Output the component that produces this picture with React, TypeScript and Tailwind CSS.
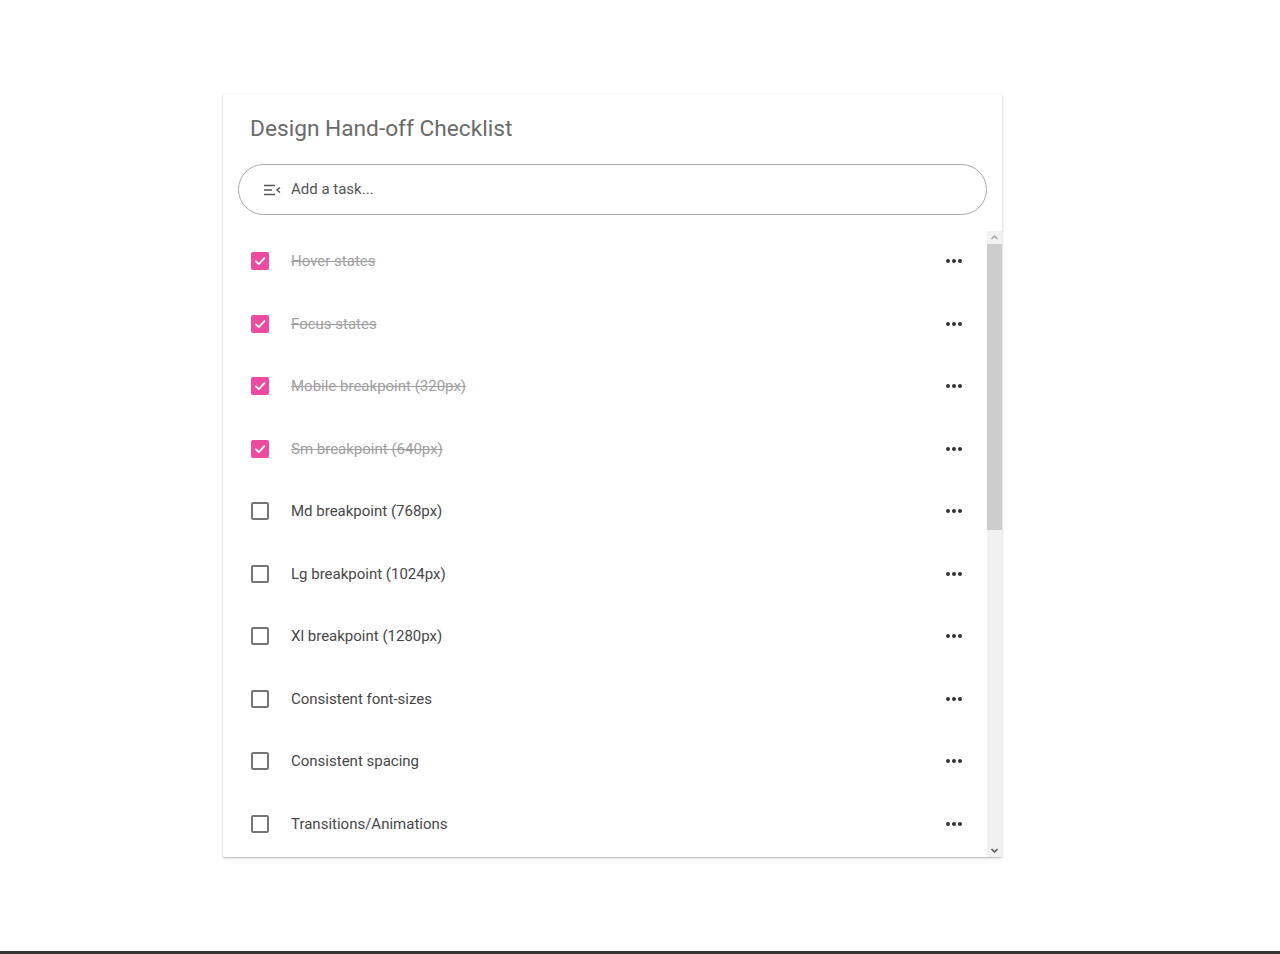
import { useState } from "react";

type Task = { id: number; label: string; done: boolean };

const initialTasks: Task[] = [
    { id: 1, label: "Hover states", done: true },
    { id: 2, label: "Focus states", done: true },
    { id: 3, label: "Mobile breakpoint (320px)", done: true },
    { id: 4, label: "Sm breakpoint (640px)", done: true },
    { id: 5, label: "Md breakpoint (768px)", done: false },
    { id: 6, label: "Lg breakpoint (1024px)", done: false },
    { id: 7, label: "Xl breakpoint (1280px)", done: false },
    { id: 8, label: "Consistent font-sizes", done: false },
    { id: 9, label: "Consistent spacing", done: false },
    { id: 10, label: "Transitions/Animations", done: false },
    { id: 11, label: "Color contrast", done: false },
    { id: 12, label: "Empty states", done: false },
    { id: 13, label: "Error states", done: false },
    { id: 14, label: "Loading states", done: false },
    { id: 15, label: "Disabled states", done: false },
    { id: 16, label: "Dark mode", done: false },
    { id: 17, label: "Icons exported", done: false },
    { id: 18, label: "Assets exported", done: false },
    { id: 19, label: "Copy reviewed", done: false },
    { id: 20, label: "Accessibility labels", done: false },
    { id: 21, label: "Print styles", done: false },
];

const VIEW_H = 626;
const ROW_H = 62.5;
const TRACK_H = VIEW_H - 26;

function MenuOpenIcon() {
    return (
        <svg width="18" height="12" viewBox="0 0 18 12" fill="none" stroke="#555" strokeWidth="1.5">
            <line x1="1" y1="1.5" x2="12" y2="1.5" />
            <line x1="1" y1="6" x2="9" y2="6" />
            <line x1="1" y1="10.5" x2="12" y2="10.5" />
            <polyline points="17,3.5 14,6 17,8.5" />
        </svg>
    );
}

function Checkbox({ checked, onChange }: { checked: boolean; onChange: () => void }) {
    return (
        <button
            type="button"
            onClick={onChange}
            className={`w-[18px] h-[18px] rounded-[2px] flex items-center justify-center shrink-0 ${
                checked ? "bg-[#ec4ba0]" : "border-2 border-[#757575] bg-white"
            }`}
        >
            {checked && (
                <svg width="14" height="14" viewBox="0 0 24 24" fill="none" stroke="white" strokeWidth="3" strokeLinecap="round" strokeLinejoin="round">
                    <polyline points="5,12.5 10,17.5 19.5,7" />
                </svg>
            )}
        </button>
    );
}

export default function App() {
    const [tasks, setTasks] = useState<Task[]>(initialTasks);
    const [draft, setDraft] = useState("");
    const [scrollTop, setScrollTop] = useState(0);

    const toggle = (id: number) =>
        setTasks(tasks.map((t) => (t.id === id ? { ...t, done: !t.done } : t)));

    const contentH = tasks.length * ROW_H;
    const thumbH = Math.max(20, (TRACK_H * VIEW_H) / contentH);
    const maxScroll = Math.max(1, contentH - VIEW_H);
    const thumbTop = (scrollTop / maxScroll) * (TRACK_H - thumbH);

    return (
        <div className="min-h-[954px] bg-white flex flex-col font-['Roboto',sans-serif]">
            <div className="flex-1 pt-[94px] pl-[223px]">
                {/* Card */}
                <div className="w-[779px] bg-white shadow-[0_1px_3px_rgba(0,0,0,0.2),0_1px_1px_rgba(0,0,0,0.12)] rounded-[2px]">
                    <div className="px-[15px] pt-[20px]">
                        <h1 className="pl-[12px] text-[22.7px] leading-[29px] text-[#6a6a6a] font-normal">
                            Design Hand-off Checklist
                        </h1>

                        {/* Add task */}
                        <div className="mt-[21px] h-[51px] rounded-full border border-[#aaa] flex items-center pl-[24px] pr-6 gap-[10px]">
                            <MenuOpenIcon />
                            <input
                                type="text"
                                value={draft}
                                onChange={(e) => setDraft(e.target.value)}
                                placeholder="Add a task..."
                                className="flex-1 outline-none text-[15px] text-[#444] placeholder:text-[#555] bg-transparent"
                            />
                        </div>
                    </div>

                    {/* List + scrollbar */}
                    <div className="mt-[16px] flex h-[626px]">
                        <div
                            className="flex-1 overflow-y-auto [scrollbar-width:none]"
                            onScroll={(e) => setScrollTop(e.currentTarget.scrollTop)}
                        >
                            {tasks.map((task) => (
                                <div key={task.id} className="h-[62.5px] flex items-center pl-[28px] pr-[21px] pb-[2px]">
                                    <Checkbox checked={task.done} onChange={() => toggle(task.id)} />
                                    <span
                                        className={`ml-[22px] flex-1 text-[15px] ${
                                            task.done ? "line-through text-[#a0a0a0]" : "text-[#474747]"
                                        }`}
                                    >
                                        {task.label}
                                    </span>
                                    <button type="button" className="flex gap-[2px] p-1" aria-label="More">
                                        <span className="w-[4px] h-[4px] rounded-full bg-[#333]" />
                                        <span className="w-[4px] h-[4px] rounded-full bg-[#333]" />
                                        <span className="w-[4px] h-[4px] rounded-full bg-[#333]" />
                                    </button>
                                </div>
                            ))}
                        </div>

                        {/* scrollbar */}
                        <div className="w-[15px] bg-[#f1f1f1] flex flex-col">
                            <div className="h-[13px] flex items-center justify-center">
                                <svg width="7" height="5" viewBox="0 0 7 5" fill="none" stroke="#a3a3a3" strokeWidth="1.3">
                                    <polyline points="0.5,4 3.5,1 6.5,4" />
                                </svg>
                            </div>
                            <div className="flex-1 relative">
                                <div
                                    className="absolute left-0 right-0 bg-[#cdcdcd]"
                                    style={{ top: thumbTop, height: thumbH }}
                                />
                            </div>
                            <div className="h-[13px] flex items-center justify-center">
                                <svg width="7" height="5" viewBox="0 0 7 5" fill="none" stroke="#505050" strokeWidth="1.5">
                                    <polyline points="0.5,1 3.5,4 6.5,1" />
                                </svg>
                            </div>
                        </div>
                    </div>
                </div>
            </div>
            <div className="h-[3px] bg-[#333]" />
        </div>
    );
}
